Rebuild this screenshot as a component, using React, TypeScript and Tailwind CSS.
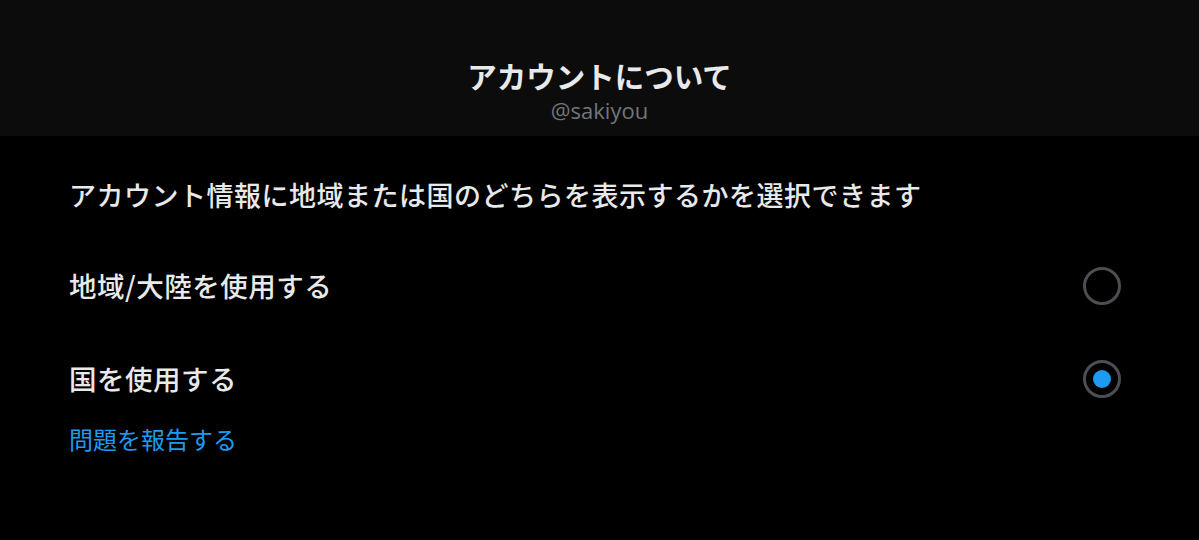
export default function App() {
  const font = { fontFamily: '"Noto Sans CJK JP", "Noto Sans", sans-serif' };
  return (
    <div className="w-[1199px] h-[540px] bg-black overflow-hidden" style={font}>
      <div className="h-[136px] bg-[#0c0c0c] flex flex-col items-center pt-[54px]">
        <h1 className="text-[29.5px] leading-[42px] font-bold text-[#e7e9ea]">アカウントについて</h1>
        <p className="text-[22px] leading-[28px] text-[#71767b] mt-[0px]" style={{ fontFamily: '"Open Sans", "Noto Sans CJK JP", sans-serif' }}>@sakiyou</p>
      </div>
      <div className="px-[69px] pt-[40px]">
        <p className="text-[27px] leading-[38px] tracking-[0.5px] font-medium text-[#e7e9ea]">アカウント情報に地域または国のどちらを表示するかを選択できます</p>
        <div className="mt-[42px] flex items-center justify-between h-[60px] pr-[9px]">
          <span className="text-[27.5px] text-[#e7e9ea] tracking-[0.5px] font-medium">地域/大陸を使用する</span>
          <span className="w-[38px] h-[38px] rounded-full border-[3px] border-[#4b4e52]" />
        </div>
        <div className="mt-[33px] flex items-center justify-between h-[60px] pr-[9px]">
          <span className="text-[27.5px] text-[#e7e9ea] tracking-[0.5px] font-medium">国を使用する</span>
          <span className="w-[38px] h-[38px] rounded-full border-[3px] border-[#4b4e52] flex items-center justify-center">
            <span className="w-[18px] h-[18px] rounded-full bg-[#1d9bf0]" />
          </span>
        </div>
        <a className="block mt-[14px] text-[24px] leading-[32px] text-[#1d9bf0]">問題を報告する</a>
      </div>
    </div>
  );
}
